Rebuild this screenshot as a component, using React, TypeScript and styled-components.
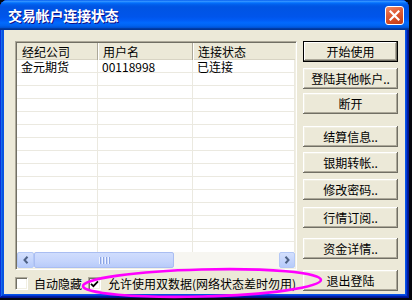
import React from "react";
import styled, { createGlobalStyle } from "styled-components";

const Global = createGlobalStyle`
  html, body { margin: 0; padding: 0; background: #05070e; }
  body {
    width: 412px; height: 300px; overflow: hidden;
    font-family: "Noto Sans CJK SC", "Liberation Sans", sans-serif;
    font-size: 12px; color: #000;
  }
  * { box-sizing: border-box; }
`;

const Stage = styled.div`
  position: relative;
  width: 412px;
  height: 300px;
`;

const Window = styled.div`
  width: 409px;
  height: 298px;
  display: flex;
  flex-direction: column;
  background: #0653e6;
  border-radius: 8px 8px 0 0;
  box-shadow: inset -1px -1px #00138c, inset 1px 1px #0831d9,
    inset -2px -2px #001ea0, inset 2px 2px #166aee, inset -3px -3px #003bda,
    inset 3px 3px #0855dd;
`;

const TitleBar = styled.div`
  height: 30px;
  flex: none;
  display: flex;
  align-items: center;
  justify-content: space-between;
  padding: 0 5px 0 8px;
  border-radius: 8px 8px 0 0;
  background: linear-gradient(
    180deg,
    #0058ee 0%,
    #3593ff 4%,
    #288eff 6%,
    #127dff 8%,
    #036ffc 10%,
    #0262ee 14%,
    #0057e5 20%,
    #0054e3 24%,
    #0055eb 56%,
    #005bf5 66%,
    #026afe 76%,
    #0062ef 86%,
    #0052d6 92%,
    #0040ab 94%,
    #003092 100%
  );
`;

const Title = styled.div`
  color: #fff;
  font-weight: 700;
  font-size: 14px;
  line-height: 16px;
  letter-spacing: -0.2px;
  text-shadow: 1px 1px #0f1089;
`;

const CloseButton = styled.div`
  width: 19px;
  height: 19px;
  border: 1px solid #fff;
  border-radius: 3px;
  background: linear-gradient(160deg, #f08a66 0%, #e2603a 35%, #d44a22 70%, #c13a16 100%);
  display: flex;
  align-items: center;
  justify-content: center;
`;

const Client = styled.div`
  flex: 1;
  margin: 0 4px 4px 4px;
  background: #ece9d8;
  display: flex;
  padding: 11px 7px 0 11px;
  gap: 6px;
`;

const LeftCol = styled.div`
  width: 282px;
  display: flex;
  flex-direction: column;
`;

const ListBox = styled.div`
  height: 229px;
  display: flex;
  flex-direction: column;
  background: #fff;
  border: 1px solid;
  border-color: #aca899 #fff #fff #aca899;
  box-shadow: inset 1px 1px #716f64, inset -1px -1px #f1efe2;
  padding: 1px;
`;

const cols = "81px 95px 1fr";

const HeaderRow = styled.div`
  display: grid;
  grid-template-columns: ${cols};
  height: 17px;
  flex: none;
  background: #ece9d8;
  box-shadow: inset 0 -1px #d8d4c4;
`;

const HeaderCell = styled.div`
  padding-left: 5px;
  line-height: 17px;
  height: 17px;
  white-space: nowrap;
  border-right: 1px solid #aca899;
  box-shadow: 1px 0 #fff;
  &:last-child { border-right: none; box-shadow: none; }
`;

const Body = styled.div`
  flex: 1;
  display: flex;
  flex-direction: column;
`;

const Row = styled.div`
  display: grid;
  grid-template-columns: ${cols};
  height: 13px;
  flex: none;
`;

const Cell = styled.div`
  padding-left: 4px;
  line-height: 13px;
  height: 13px;
  white-space: nowrap;
  box-shadow: inset -1px -1px #ebe9e0;
`;

const Filler = styled.div`
  flex: 1;
  display: grid;
  grid-template-columns: ${cols};
`;

const FillerCell = styled.div`
  box-shadow: inset -1px 0 #ebe9e0;
`;

const HScroll = styled.div`
  height: 16px;
  flex: none;
  display: flex;
  background: #f7f6f1;
`;

const ArrowBtn = styled.div<{ $w: number }>`
  width: ${(p) => p.$w}px;
  height: 16px;
  flex: none;
  border: 1px solid #b4c8f6;
  border-radius: 2px;
  background: linear-gradient(180deg, #d4e0fd 0%, #c2d3fc 60%, #b6cbfa 100%);
  display: flex;
  align-items: center;
  justify-content: center;
`;

const Thumb = styled.div`
  width: 140px;
  height: 16px;
  flex: none;
  border: 1px solid #a9bdf2;
  border-radius: 2px;
  background: linear-gradient(180deg, #d0ddfd 0%, #c4d4fc 60%, #b8cbf9 100%);
  display: flex;
  align-items: center;
  justify-content: center;
  gap: 1px;
`;

const Grip = styled.span`
  width: 1px;
  height: 7px;
  background: #eef3ff;
  box-shadow: 1px 0 #8ca5e4;
  margin-right: 1px;
`;

const Track = styled.div`
  flex: 1;
`;

const CheckRow = styled.div`
  margin-top: 7px;
  display: flex;
  align-items: center;
  height: 13px;
`;

const CheckBox = styled.div<{ $ml: number }>`
  width: 13px;
  height: 13px;
  flex: none;
  margin-left: ${(p) => p.$ml}px;
  background: #fff;
  border: 1px solid;
  border-color: #aca899 #fff #fff #aca899;
  box-shadow: inset 1px 1px #716f64, inset -1px -1px #f1efe2;
  display: flex;
  align-items: center;
  justify-content: center;
`;

const CheckLabel = styled.span<{ $ml: number }>`
  margin-left: ${(p) => p.$ml}px;
  line-height: 13px;
  white-space: nowrap;
`;

const RightCol = styled.div`
  width: 95px;
  display: flex;
  flex-direction: column;
`;

const Btn = styled.div<{ $mt: number; $default?: boolean }>`
  margin-top: ${(p) => p.$mt}px;
  height: 21px;
  width: 95px;
  flex: none;
  display: flex;
  align-items: center;
  justify-content: center;
  line-height: 13px;
  white-space: nowrap;
  background: #ece9d8;
  box-shadow: ${(p) =>
    p.$default
      ? "inset 0 0 0 1px #000, inset -2px -2px #716f64, inset 2px 2px #fff, inset -3px -3px #aca899"
      : "inset -1px -1px #716f64, inset 1px 1px #fff, inset -2px -2px #aca899, inset 2px 2px #f1efe2"};
`;

const Annotation = styled.svg`
  position: absolute;
  left: 76px;
  top: 264px;
  pointer-events: none;
`;

const buttons: { label: string; mt: number; def?: boolean }[] = [
  { label: "开始使用", mt: 0, def: true },
  { label: "登陆其他帐户..", mt: 6 },
  { label: "断开", mt: 4 },
  { label: "结算信息..", mt: 12 },
  { label: "银期转帐..", mt: 5 },
  { label: "修改密码..", mt: 6 },
  { label: "行情订阅..", mt: 7 },
  { label: "资金详情..", mt: 10 },
  { label: "退出登陆", mt: 11 },
];

const rows: string[][] = [["金元期货", "00118998", "已连接"]];
for (let i = 0; i < 13; i++) rows.push(["", "", ""]);

export default function App() {
  return (
    <Stage>
      <Global />
      <Window>
        <TitleBar>
          <Title>交易帐户连接状态</Title>
          <CloseButton>
            <svg width="11" height="11" viewBox="0 0 11 11">
              <path d="M1.5 1.5 L9.5 9.5 M9.5 1.5 L1.5 9.5" stroke="#fff" strokeWidth="2.2" strokeLinecap="square" />
            </svg>
          </CloseButton>
        </TitleBar>
        <Client>
          <LeftCol>
            <ListBox>
              <HeaderRow>
                <HeaderCell>经纪公司</HeaderCell>
                <HeaderCell>用户名</HeaderCell>
                <HeaderCell>连接状态</HeaderCell>
              </HeaderRow>
              <Body>
                {rows.map((r, i) => (
                  <Row key={i}>
                    {r.map((c, j) => (
                      <Cell key={j}>{c}</Cell>
                    ))}
                  </Row>
                ))}
                <Filler>
                  <FillerCell />
                  <FillerCell />
                  <FillerCell />
                </Filler>
              </Body>
              <HScroll>
                <ArrowBtn $w={17}>
                  <svg width="6" height="8" viewBox="0 0 6 8">
                    <path d="M4.5 0.8 L1.5 4 L4.5 7.2" stroke="#4d6185" strokeWidth="2" fill="none" />
                  </svg>
                </ArrowBtn>
                <Thumb>
                  <Grip />
                  <Grip />
                  <Grip />
                  <Grip />
                </Thumb>
                <Track />
                <ArrowBtn $w={16}>
                  <svg width="6" height="8" viewBox="0 0 6 8">
                    <path d="M1.5 0.8 L4.5 4 L1.5 7.2" stroke="#4d6185" strokeWidth="2" fill="none" />
                  </svg>
                </ArrowBtn>
              </HScroll>
            </ListBox>
            <CheckRow>
              <CheckBox $ml={0} />
              <CheckLabel $ml={6}>自动隐藏</CheckLabel>
              <CheckBox $ml={6}>
                <svg width="9" height="8" viewBox="0 0 9 8">
                  <path d="M1 3.8 L3.4 6.2 L8 1.3" stroke="#000" strokeWidth="1.8" fill="none" />
                </svg>
              </CheckBox>
              <CheckLabel $ml={7}>允许使用双数据(网络状态差时勿用)</CheckLabel>
            </CheckRow>
          </LeftCol>
          <RightCol>
            {buttons.map((b) => (
              <Btn key={b.label} $mt={b.mt} $default={b.def}>
                {b.label}
              </Btn>
            ))}
          </RightCol>
        </Client>
      </Window>
      <Annotation width="252" height="36" viewBox="0 0 252 36">
        <ellipse cx="126" cy="19" rx="119" ry="13.5" transform="rotate(-1.5 126 19)" fill="none" stroke="#ff00ff" strokeWidth="2.6" />
      </Annotation>
    </Stage>
  );
}
